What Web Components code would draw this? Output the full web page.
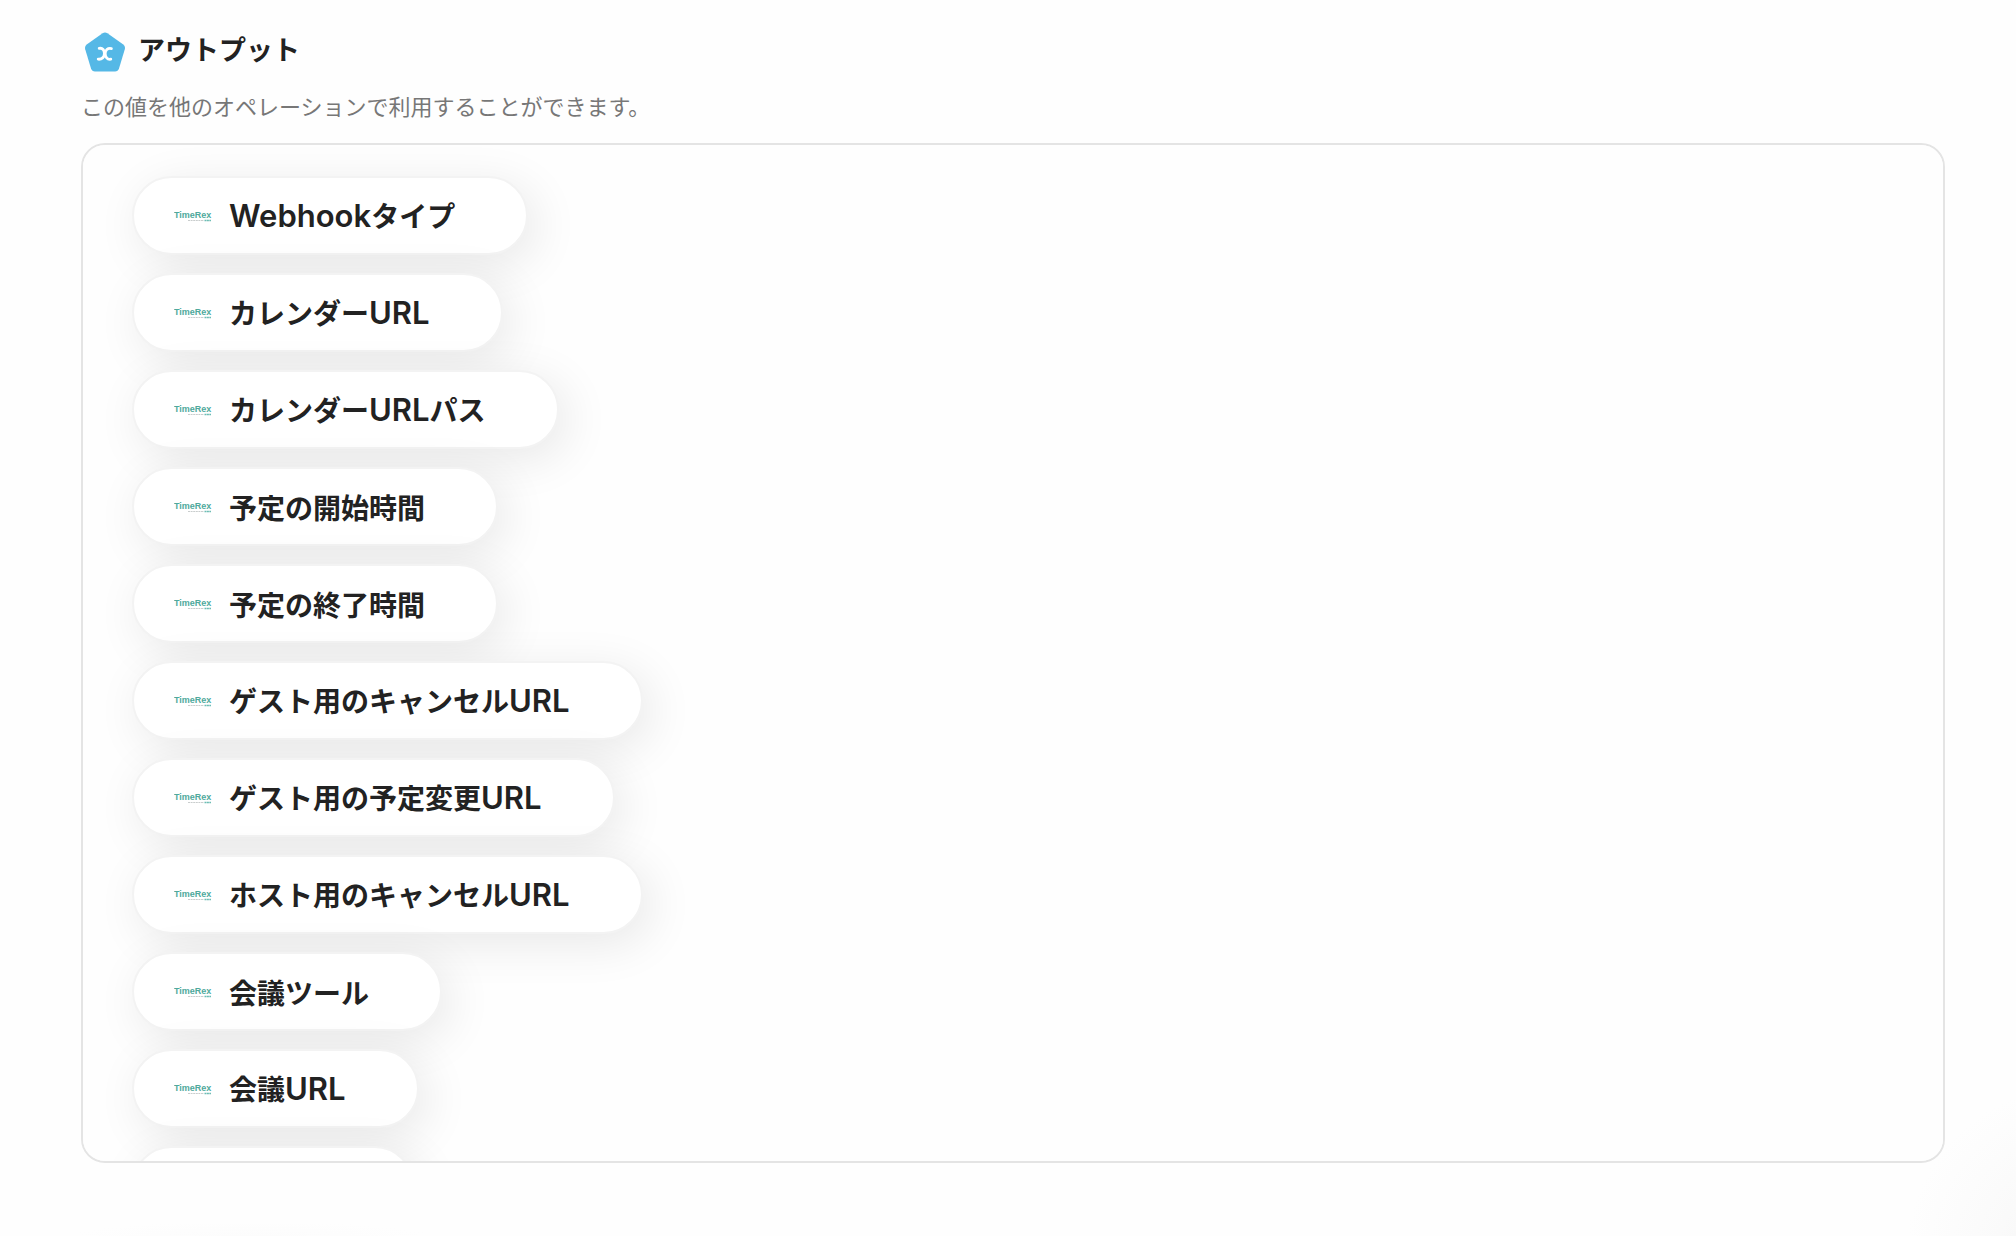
<!DOCTYPE html>
<html lang="ja">
<head>
<meta charset="UTF-8">
<meta name="viewport" content="width=device-width, initial-scale=1">
<title>アウトプット</title>
<style>
  body {
    margin: 0;
    color: #222;
    font-family: "Noto Sans CJK JP", sans-serif;
  }
</style>
</head>
<body>
<output-page>
  <section-title>アウトプット</section-title>
  <section-note>この値を他のオペレーションで利用することができます。</section-note>
  <output-list>
    <output-chip>Webhookタイプ</output-chip>
    <output-chip>カレンダーURL</output-chip>
    <output-chip>カレンダーURLパス</output-chip>
    <output-chip>予定の開始時間</output-chip>
    <output-chip>予定の終了時間</output-chip>
    <output-chip>ゲスト用のキャンセルURL</output-chip>
    <output-chip>ゲスト用の予定変更URL</output-chip>
    <output-chip>ホスト用のキャンセルURL</output-chip>
    <output-chip>会議ツール</output-chip>
    <output-chip>会議URL</output-chip>
    <output-chip></output-chip>
  </output-list>
</output-page>

<script>
class OutputPage extends HTMLElement {
  constructor() {
    super();
    this.attachShadow({ mode: "open" });
  }

  connectedCallback() {
    this.shadowRoot.innerHTML = `
      <style>
        :host {
          display: flex;
          flex-direction: column;
          box-sizing: border-box;
          height: 100vh;
          padding: 26px 71px 73px 81px;
          background:
            radial-gradient(circle at calc(100% + 60px) calc(100% + 20px), #f5f5f5 0, #fafafa 80px, rgba(254, 254, 254, 0) 170px),
            radial-gradient(180px 14px at 250px 100%, #fcfcfc, rgba(254, 254, 254, 0)),
            #fefefe;
        }
      </style>
      <slot></slot>
    `;
  }
}

class SectionTitle extends HTMLElement {
  constructor() {
    super();
    this.attachShadow({ mode: "open" });
  }

  connectedCallback() {
    this.shadowRoot.innerHTML = `
      <style>
        :host {
          display: block;
        }
        h2 {
          display: flex;
          align-items: flex-end;
          gap: 12px;
          margin: 0;
          padding-left: 3px;
          font-size: 27px;
          font-weight: 700;
          line-height: 46px;
        }
        svg {
          width: 42px;
          height: 40px;
        }
      </style>
      <h2>
        <svg viewBox="0 0 42 40" aria-hidden="true">
          <path fill="#55b8e6" d="M18.6 1.2Q21 -.4 23.4 1.2L39.3 12.6Q41.6 14.4 40.8 17.2L35 36.4Q34 39.4 31 39.4H11Q8 39.4 7 36.4L1.2 17.2Q.4 14.4 2.7 12.6Z"/>
          <path fill="none" stroke="#fff" stroke-width="2.8" stroke-linecap="round" d="M15.2 16.4C18.800 15.600 20.400 18.400 20.400 21.400C20.400 25.200 17.800 27.600 14.200 27.200M27.400 16.600C23.600 15.800 21.200 18.200 21.200 21.600C21.200 25 23.200 27.900 26.800 27.200"/>
        </svg>
        <slot></slot>
      </h2>
    `;
  }
}

class SectionNote extends HTMLElement {
  constructor() {
    super();
    this.attachShadow({ mode: "open" });
  }

  connectedCallback() {
    this.shadowRoot.innerHTML = `
      <style>
        :host {
          display: block;
          margin: 17px 0 21px;
        }
        p {
          margin: 0;
          color: #777;
          font-size: 22px;
          line-height: 33px;
        }
      </style>
      <p><slot></slot></p>
    `;
  }
}

class OutputList extends HTMLElement {
  constructor() {
    super();
    this.attachShadow({ mode: "open" });
  }

  connectedCallback() {
    this.shadowRoot.innerHTML = `
      <style>
        :host {
          display: flex;
          flex: 1;
          flex-direction: column;
          align-items: flex-start;
          gap: 18px;
          box-sizing: border-box;
          min-height: 0;
          padding: 31px 49px;
          overflow-y: auto;
          scrollbar-width: none;
          background: #fefefe;
          border: 2px solid #e4e4e4;
          border-radius: 24px;
        }
      </style>
      <slot></slot>
    `;
  }
}

class OutputChip extends HTMLElement {
  constructor() {
    super();
    this.attachShadow({ mode: "open" });
  }

  connectedCallback() {
    this.shadowRoot.innerHTML = `
      <style>
        :host {
          display: flex;
          flex: none;
          align-items: center;
          gap: 17px;
          box-sizing: border-box;
          min-width: 282px;
          height: 79px;
          padding: 0 71px 0 40px;
          background: #fff;
          border: 2px solid #f3f3f3;
          border-radius: 40px;
          box-shadow: 8px 10px 48px rgba(0, 0, 0, 0.09);
          font-size: 28px;
          font-weight: 700;
          line-height: 42px;
          white-space: nowrap;
        }
        :host(:empty) svg {
          display: none;
        }
        svg {
          flex: none;
          width: 38px;
          height: 14px;
        }
        .latin {
          font-family: Inter, "Liberation Sans", sans-serif;
          font-size: 31px;
          font-weight: 600;
        }
      </style>
      <svg viewBox="0 0 38 14" aria-hidden="true">
        <text x="0" y="9" fill="#4fa99c" font-family="Liberation Sans, sans-serif" font-size="9" font-weight="700">TimeRex</text>
        <path stroke="#c9cdcd" stroke-width="1.2" stroke-dasharray="2 .6" d="M14 11.5H30"/>
        <path stroke="#6dbdb4" stroke-width="1.6" stroke-dasharray="2 .4" d="M30.5 11.5H37"/>
      </svg>
      <span class="label"></span>
    `;

    this.label = this.shadowRoot.querySelector(".label");
    this.renderLabel(this.textContent);
  }

  // Latin runs get their own face, a bit larger than the kana
  renderLabel(text) {
    text.split(/([A-Za-z]+)/).forEach((part) => {
      if (!part) return;
      const span = document.createElement("span");
      span.textContent = part;
      if (/^[A-Za-z]/.test(part)) span.className = "latin";
      this.label.appendChild(span);
    });
  }
}

customElements.define("output-page", OutputPage);
customElements.define("section-title", SectionTitle);
customElements.define("section-note", SectionNote);
customElements.define("output-list", OutputList);
customElements.define("output-chip", OutputChip);
</script>
</body>
</html>
